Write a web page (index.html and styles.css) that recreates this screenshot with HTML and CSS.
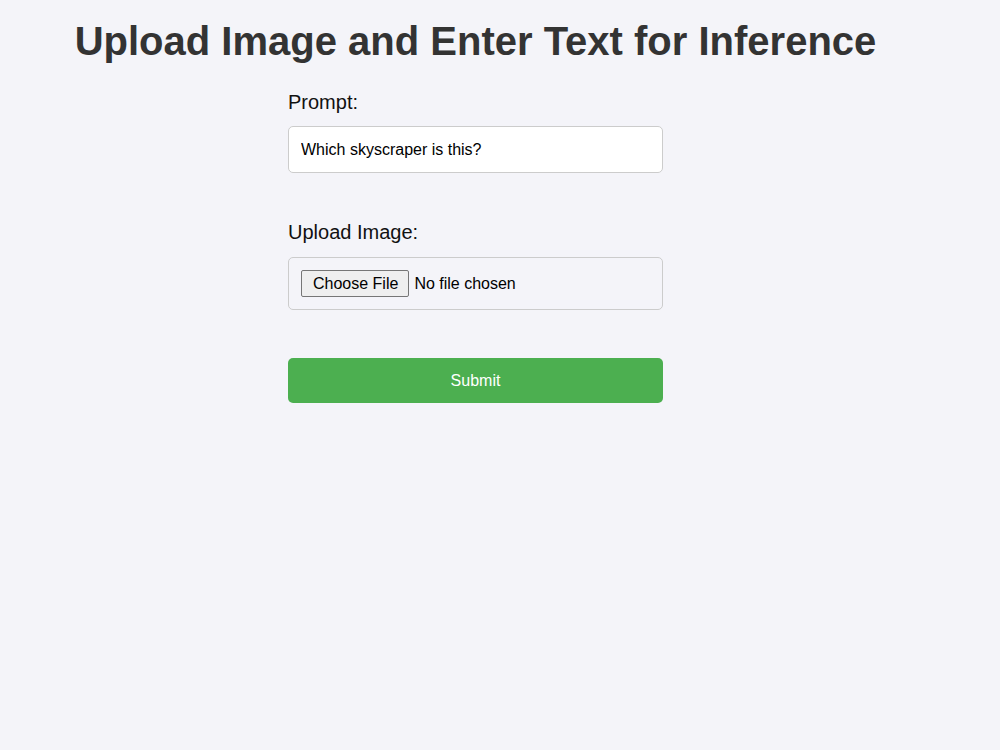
FILE: index.html
```html
<!DOCTYPE html>
<html lang="en">
<head>
    <meta charset="UTF-8">
    <meta name="viewport" content="width=device-width, initial-scale=1.0">
    <title>Image Inference</title>
    <link rel="stylesheet" href="styles.css">
</head>
<body>

    <div class="page">
        <h1>Upload Image and Enter Text for Inference</h1>

        <!-- Inference form -->
        <form class="infer-form" onsubmit="return false;">
            <div class="field">
                <label for="prompt">Prompt:</label>
                <input type="text" id="prompt" name="prompt" value="Which skyscraper is this?">
            </div>

            <div class="field">
                <label for="image">Upload Image:</label>
                <input type="file" id="image" name="image" accept="image/*">
            </div>

            <button type="submit" class="btn">Submit</button>
        </form>
    </div>

</body>
</html>
```

FILE: styles.css
```css
body {
    font-family: "Liberation Sans", Arial, sans-serif;
    background-color: #f4f4f9;
    margin: 0;
    padding: 0;
    color: #111;
}
.page {
    width: 951px;
    padding-top: 19px;
}
h1 {
    font-size: 40px;
    font-weight: bold;
    color: #333;
    text-align: center;
    margin: 0 0 27px;
}
.infer-form {
    width: 375px;
    margin: 0 auto;
    display: flex;
    flex-direction: column;
}
.field {
    display: flex;
    flex-direction: column;
    margin-bottom: 48px;
}
.field + .field label {
    margin-bottom: 13px;
}
label {
    font-size: 20px;
    margin-bottom: 12px;
}
input[type="text"] {
    box-sizing: border-box;
    width: 100%;
    height: 47px;
    padding: 0 12px;
    border: 1px solid #ccc;
    border-radius: 5px;
    background: white;
    font-family: inherit;
    font-size: 16px;
    color: #000;
}
input[type="file"] {
    box-sizing: border-box;
    width: 100%;
    height: 53px;
    padding: 12px;
    border: 1px solid #ccc;
    border-radius: 5px;
    font-family: inherit;
    font-size: 16px;
    color: #000;
}
input[type="file"]::file-selector-button {
    height: 27px;
    padding: 0 10px 0 11px;
    margin-right: 5px;
    border: 1px solid #767676;
    border-radius: 2px;
    background: #efefef;
    font-family: inherit;
    font-size: 16px;
    color: #000;
}
.btn {
    height: 45px;
    border: none;
    border-radius: 5px;
    background: #4caf50;
    color: white;
    font-family: inherit;
    font-size: 16px;
    cursor: pointer;
}
.btn:hover {
    background: #45a049;
}
```
